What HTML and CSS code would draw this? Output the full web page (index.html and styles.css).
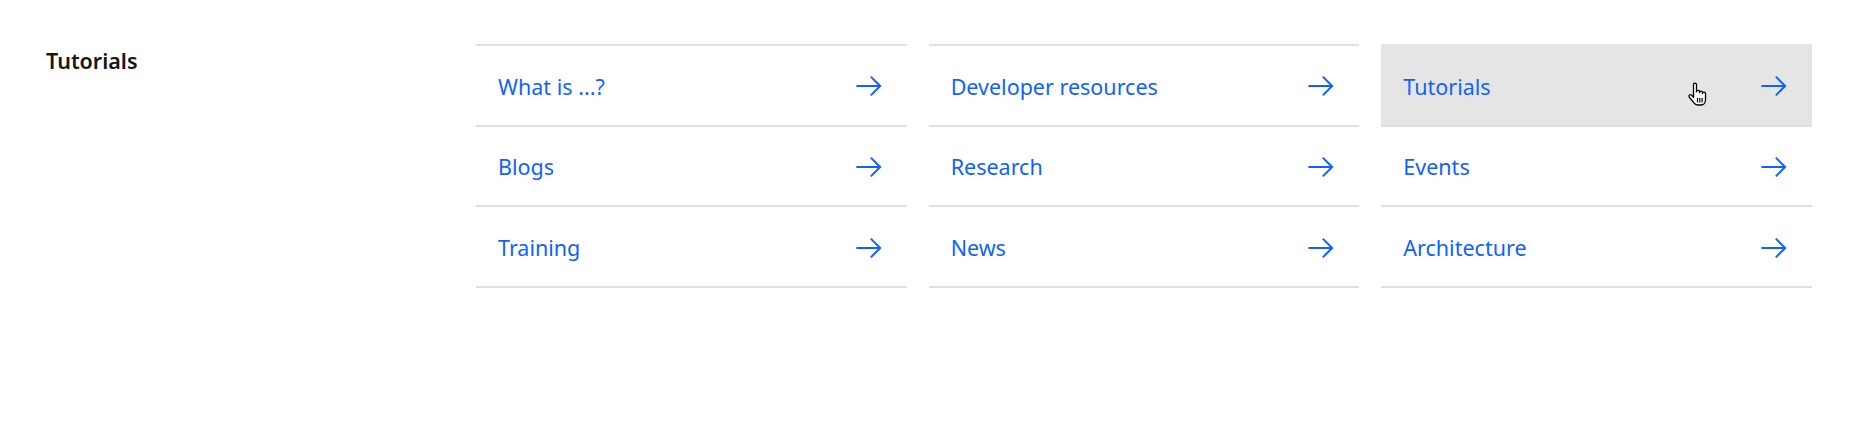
FILE: index.html
```html
<!DOCTYPE html>
<html lang="en">
<head>
<meta charset="utf-8">
<title>Tutorials</title>
<link rel="stylesheet" href="styles.css">
</head>
<body>
<section class="section">
  <h2 class="heading">Tutorials</h2>
  <ul class="links">
    <li class="cell"><a class="link" href="#"><span class="label">What is ...?</span><svg class="arrow" viewBox="0 0 20 20"><path d="M11.8 2.8L10.8 3.8 16.2 9.3 1 9.3 1 10.7 16.2 10.7 10.8 16.2 11.8 17.2 19 10z"/></svg></a></li>
    <li class="cell"><a class="link" href="#"><span class="label">Developer resources</span><svg class="arrow" viewBox="0 0 20 20"><path d="M11.8 2.8L10.8 3.8 16.2 9.3 1 9.3 1 10.7 16.2 10.7 10.8 16.2 11.8 17.2 19 10z"/></svg></a></li>
    <li class="cell is-hover"><a class="link" href="#"><span class="label">Tutorials</span><svg class="arrow" viewBox="0 0 20 20"><path d="M11.8 2.8L10.8 3.8 16.2 9.3 1 9.3 1 10.7 16.2 10.7 10.8 16.2 11.8 17.2 19 10z"/></svg></a>
      <svg class="cursor" viewBox="0 0 24 26"><path d="M6.5 2.6a1.5 1.5 0 0 1 3 0v7.2a1.5 1.5 0 0 1 3 0v.9a1.5 1.5 0 0 1 3 0v.9a1.5 1.5 0 0 1 3 0v6.2c0 3-1.9 5.2-4.6 5.2h-3.2c-1.8 0-2.9-.8-3.8-2.1L2.2 15a1.5 1.5 0 0 1 2.3-1.9l2 2.3z" fill="#fff" stroke="#000" stroke-width="1.3" stroke-linejoin="round"/><path d="M10.5 16v4.5M12.8 16v4.5M15.1 16v4.5" stroke="#000" stroke-width="1.2"/></svg>
    </li>
    <li class="cell"><a class="link" href="#"><span class="label">Blogs</span><svg class="arrow" viewBox="0 0 20 20"><path d="M11.8 2.8L10.8 3.8 16.2 9.3 1 9.3 1 10.7 16.2 10.7 10.8 16.2 11.8 17.2 19 10z"/></svg></a></li>
    <li class="cell"><a class="link" href="#"><span class="label">Research</span><svg class="arrow" viewBox="0 0 20 20"><path d="M11.8 2.8L10.8 3.8 16.2 9.3 1 9.3 1 10.7 16.2 10.7 10.8 16.2 11.8 17.2 19 10z"/></svg></a></li>
    <li class="cell"><a class="link" href="#"><span class="label">Events</span><svg class="arrow" viewBox="0 0 20 20"><path d="M11.8 2.8L10.8 3.8 16.2 9.3 1 9.3 1 10.7 16.2 10.7 10.8 16.2 11.8 17.2 19 10z"/></svg></a></li>
    <li class="cell last"><a class="link" href="#"><span class="label">Training</span><svg class="arrow" viewBox="0 0 20 20"><path d="M11.8 2.8L10.8 3.8 16.2 9.3 1 9.3 1 10.7 16.2 10.7 10.8 16.2 11.8 17.2 19 10z"/></svg></a></li>
    <li class="cell last"><a class="link" href="#"><span class="label">News</span><svg class="arrow" viewBox="0 0 20 20"><path d="M11.8 2.8L10.8 3.8 16.2 9.3 1 9.3 1 10.7 16.2 10.7 10.8 16.2 11.8 17.2 19 10z"/></svg></a></li>
    <li class="cell last"><a class="link" href="#"><span class="label">Architecture</span><svg class="arrow" viewBox="0 0 20 20"><path d="M11.8 2.8L10.8 3.8 16.2 9.3 1 9.3 1 10.7 16.2 10.7 10.8 16.2 11.8 17.2 19 10z"/></svg></a></li>
  </ul>
</section>
</body>
</html>
```

FILE: styles.css
```css
* { box-sizing: border-box; }
html, body { margin: 0; padding: 0; background: #ffffff; }
body { font-family: "Noto Sans", "Open Sans", sans-serif; }

.section {
  display: flex;
  align-items: flex-start;
  padding: 44px 44px 0 46px;
}

.heading {
  flex: 0 0 430px;
  margin: 0;
  font-size: 21.5px;
  font-weight: 600;
  line-height: 28px;
  color: #161616;
  padding-top: 3px;
}

.links {
  flex: 1;
  display: grid;
  grid-template-columns: repeat(3, 1fr);
  column-gap: 22px;
  margin: 0;
  padding: 0;
  list-style: none;
}

.cell {
  position: relative;
  height: 80.67px;
  border-top: 2px solid #e0e0e0;
}

.cell.last {
  border-bottom: 2px solid #e0e0e0;
  height: 82.67px;
}

.cell.is-hover {
  background: #e5e5e5;
  border-top-color: #e5e5e5;
}

.link {
  display: flex;
  align-items: center;
  justify-content: space-between;
  height: 78.67px;
  padding: 0 24px 0 22px;
  color: #0f62fe;
  text-decoration: none;
  font-size: 21.5px;
  line-height: 28px;
}

.label { padding-top: 3px; }

.arrow {
  width: 28px;
  height: 28px;
  margin-top: 2px;
  fill: #0f62fe;
  flex: 0 0 auto;
}

.cursor {
  position: absolute;
  left: 306px;
  top: 36px;
  width: 24px;
  height: 26px;
}
```
